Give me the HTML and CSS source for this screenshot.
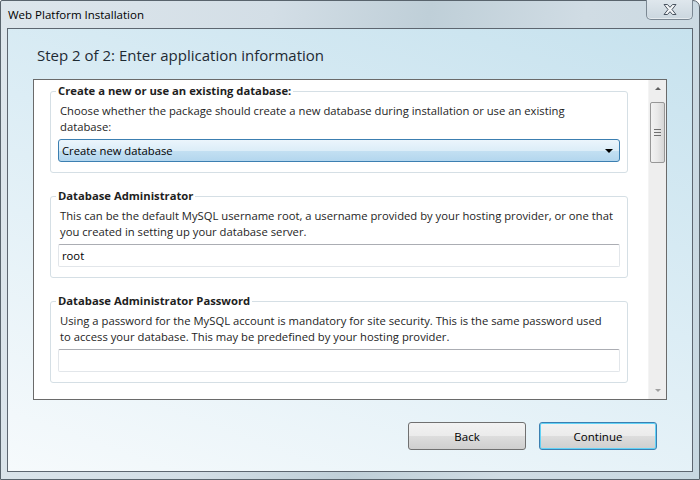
FILE: index.html
```html
<!DOCTYPE html>
<html lang="en">
<head>
    <meta charset="UTF-8">
    <meta name="viewport" content="width=device-width, initial-scale=1.0">
    <title>Web Platform Installation</title>
    <link rel="stylesheet" href="styles.css">
</head>
<body>
    <div class="window">
        <!-- Title bar -->
        <div class="titlebar">
            <span class="title">Web Platform Installation</span>
            <button class="close" type="button" aria-label="Close">
                <svg width="14" height="11" viewBox="0 0 14 11">
                    <polygon points="1,0.5 4.5,0.5 7,3.3 9.5,0.5 13,0.5 9,5.5 13,10.5 9.5,10.5 7,7.7 4.5,10.5 1,10.5 5,5.5"
                             fill="#f4f6f8" stroke="#4a5561" stroke-width="1" stroke-linejoin="round"/>
                </svg>
            </button>
        </div>

        <!-- Client area -->
        <div class="client">
            <h1>Step 2 of 2: Enter application information</h1>

            <div class="panel">
                <div class="panel-content">
                    <fieldset class="group">
                        <legend>Create a new or use an existing database:</legend>
                        <p>Choose whether the package should create a new database during installation or use an existing database:</p>
                        <div class="combo">
                            <span>Create new database</span>
                            <span class="combo-arrow"></span>
                        </div>
                    </fieldset>

                    <fieldset class="group">
                        <legend>Database Administrator</legend>
                        <p>This can be the default MySQL username root, a username provided by your hosting provider, or one that you created in setting up your database server.</p>
                        <input class="textbox" type="text" value="root">
                    </fieldset>

                    <fieldset class="group">
                        <legend>Database Administrator Password</legend>
                        <p>Using a password for the MySQL account is mandatory for site security. This is the same password used to access your database. This may be predefined by your hosting provider.</p>
                        <input class="textbox" type="password" value="">
                    </fieldset>
                </div>

                <!-- Vertical scrollbar -->
                <div class="scrollbar">
                    <span class="sb-arrow sb-up"></span>
                    <span class="sb-thumb"><span class="sb-grip"></span></span>
                    <span class="sb-track"></span>
                    <span class="sb-arrow sb-down"></span>
                </div>
            </div>

            <div class="actions">
                <button class="btn" type="button">Back</button>
                <button class="btn btn-default" type="button">Continue</button>
            </div>
        </div>
    </div>
</body>
</html>
```

FILE: styles.css
```css
/* General Styles */
body {
    margin: 0;
    padding: 0;
    font-family: "Open Sans", "Noto Sans", sans-serif;
    font-size: 11.25px;
    color: #1e1e1e;
    background: #ffffff;
}

.window {
    box-sizing: border-box;
    width: 700px;
    height: 480px;
    display: flex;
    flex-direction: column;
    padding: 0 6px 7px 6px;
    border: 1px solid #59646d;
    border-top-right-radius: 7px;
    border-top-left-radius: 2px;
    background: linear-gradient(100deg, #dde6ec 0%, #d3dee6 35%, #bfcfd8 55%, #d0dce4 75%, #c8d8e1 100%);
}

/* Title bar */
.titlebar {
    height: 28px;
    display: flex;
    align-items: flex-start;
    justify-content: space-between;
    margin-top: -1px; /* close button sits on the outer edge */
}

.title {
    padding: 8px 0 0 1px;
    font-size: 11.5px;
    line-height: 14px;
    color: #000;
}

.close {
    width: 47px;
    height: 20px;
    padding: 0;
    display: flex;
    align-items: center;
    justify-content: center;
    border: 1px solid #7b8893;
    border-top: none;
    border-radius: 0 0 5px 5px;
    background: linear-gradient(#dfe7ed, #cbd7df);
    box-shadow: inset 0 -1px 0 rgba(255, 255, 255, 0.5);
}

.client {
    flex: 1;
    display: flex;
    flex-direction: column;
    padding: 0 25px;
    border: 1px solid #5d6670;
    background: linear-gradient(200deg, #c7e2ee 0%, #dcedf5 45%, #f6fafc 100%);
}

h1 {
    margin: 0;
    padding: 14px 0 12px 4px;
    font-size: 15px;
    font-weight: normal;
    line-height: 24px;
    color: #1e2a33;
}

/* Scrolling panel */
.panel {
    height: 319px;
    display: flex;
    border: 1px solid #6a6a6a;
    background: #fff;
    overflow: hidden;
}

.panel-content {
    flex: 1;
    padding: 3px 20px 0 16px;
    overflow: hidden;
}

.group {
    margin: 0 0 15px 0;
    padding: 0 7px 10px 7px;
    border: 1px solid #d5dfe5;
    border-radius: 3px;
    min-width: 0;
}

.group legend {
    margin-left: -2px;
    padding: 0 2px;
    font-weight: bold;
    line-height: 16px;
    color: #1e1e1e;
}

.group p {
    margin: 4px 0 4px 0;
    padding: 0 5.5px 0 2px;
    line-height: 16px;
    color: #1e1e1e;
}

.combo {
    box-sizing: border-box;
    height: 23px;
    display: flex;
    align-items: center;
    justify-content: space-between;
    padding: 0 6px 0 3px;
    border: 1px solid #3c7fb1;
    border-radius: 3px;
    background: linear-gradient(#ebf5fc 0%, #dcedf8 50%, #c4e0f2 50%, #b3d6ee 100%);
    color: #000;
}

.combo-arrow {
    width: 0;
    height: 0;
    border-left: 4px solid transparent;
    border-right: 4px solid transparent;
    border-top: 4px solid #000;
}

.textbox {
    box-sizing: border-box;
    display: block;
    width: 100%;
    height: 23px;
    margin: 0;
    padding: 0 3px;
    border: 1px solid #e2e6ea;
    border-top-color: #abadb3;
    border-radius: 2px;
    font-family: inherit;
    font-size: 11.25px;
    color: #000;
    outline: none;
}

/* Scrollbar */
.scrollbar {
    width: 17px;
    display: flex;
    flex-direction: column;
    background: #eeeeee;
    border-left: 1px solid #f4f4f4;
}

.sb-arrow {
    height: 17px;
    display: flex;
    align-items: center;
    justify-content: center;
}

.sb-arrow::before {
    content: "";
    border-left: 3px solid transparent;
    border-right: 3px solid transparent;
}

.sb-up::before {
    border-bottom: 3px solid #606060;
}

.sb-down::before {
    border-top: 3px solid #a0a0a0;
}

.sb-thumb {
    box-sizing: border-box;
    height: 61px;
    margin: 5px 1px 0 1px;
    display: flex;
    align-items: center;
    justify-content: center;
    border: 1px solid #979797;
    border-radius: 2px;
    background: linear-gradient(90deg, #f2f2f2 0%, #e8e8e8 50%, #d6d6d6 100%);
}

.sb-grip {
    width: 7px;
    height: 1px;
    background: #6f6f6f;
    box-shadow: 0 -3px 0 #6f6f6f, 0 3px 0 #6f6f6f;
}

.sb-track {
    flex: 1;
}

/* Buttons */
.actions {
    display: flex;
    justify-content: flex-end;
    gap: 13px;
    margin-top: 22px;
    padding-right: 10px;
}

.btn {
    width: 118px;
    height: 28px;
    padding: 0;
    border: 1px solid #707070;
    border-radius: 3px;
    background: linear-gradient(#f2f2f2 0%, #ebebeb 50%, #dddddd 50%, #cfcfcf 100%);
    font-family: inherit;
    font-size: 11.5px;
    color: #000;
}

.btn-default {
    border-color: #3c7fb1;
    box-shadow: inset 0 0 0 1px #62d2f6;
}
```
